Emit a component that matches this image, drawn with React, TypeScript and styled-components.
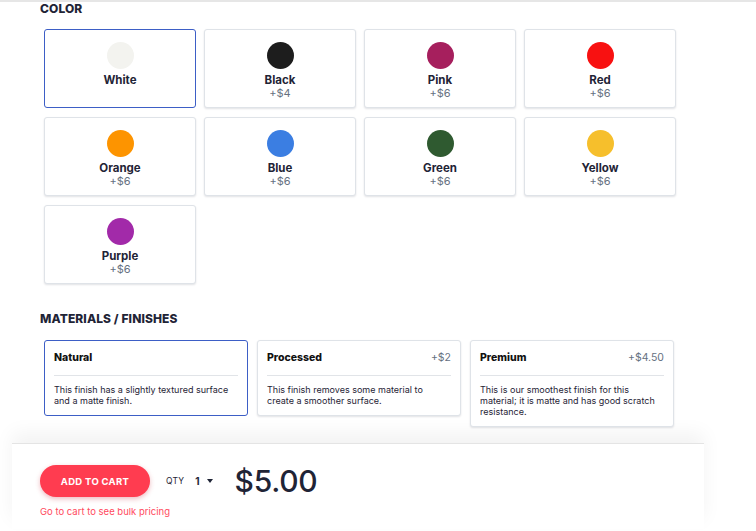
import styled, { createGlobalStyle } from 'styled-components';

const GlobalStyle = createGlobalStyle`
  body {
    margin: 0;
    background: #ffffff;
    font-family: Inter, "Noto Sans", sans-serif;
    color: #1f2436;
  }
`;

const Page = styled.div`
  width: 756px;
  height: 531px;
  overflow: hidden;
  border-top: 2px solid #e6e6e6;
  box-sizing: border-box;
`;

const Content = styled.div`
  padding: 0 40px;
`;

const SectionTitle = styled.h2<{ $gap?: number; $below?: number }>`
  margin: ${({ $gap }) => $gap ?? 0}px 0 ${({ $below }) => $below ?? 14}px;
  font-size: 12px;
  line-height: 14px;
  font-weight: 800;
  letter-spacing: 0.1px;
  text-transform: uppercase;
  color: #1f2436;
`;

const ColorGrid = styled.div`
  display: grid;
  grid-template-columns: repeat(4, 152px);
  column-gap: 8px;
  row-gap: 9px;
  margin-left: 4px;
`;

const Card = styled.div<{ $selected?: boolean }>`
  box-sizing: border-box;
  background: #fff;
  border: 1px solid ${({ $selected }) => ($selected ? '#3d5ec6' : '#dfe3e8')};
  border-radius: 3px;
  box-shadow: ${({ $selected }) => ($selected ? 'none' : '0 1px 2px rgba(40, 50, 70, 0.14)')};
  cursor: pointer;
`;

const ColorCard = styled(Card)`
  height: 79px;
  display: flex;
  flex-direction: column;
  align-items: center;
  padding-top: 12px;
`;

const Swatch = styled.div<{ $color: string }>`
  width: 27px;
  height: 27px;
  border-radius: 50%;
  background: ${({ $color }) => $color};
  margin-bottom: 4px;
`;

const ColorName = styled.div`
  font-size: 11.5px;
  line-height: 14px;
  font-weight: 700;
  color: #1f2436;
`;

const Price = styled.div`
  font-size: 11px;
  line-height: 13px;
  color: #66717f;
`;

const MaterialGrid = styled.div`
  display: grid;
  grid-template-columns: repeat(3, 204px);
  column-gap: 9px;
  align-items: start;
  margin-left: 4px;
`;

const MaterialCard = styled(Card)`
  padding: 10px 9px 9px;
`;

const MaterialHead = styled.div`
  display: flex;
  justify-content: space-between;
  align-items: center;
  padding-bottom: 10px;
  border-bottom: 1px solid #e1e4e8;
  margin-bottom: 8px;
`;

const MaterialName = styled.div`
  font-size: 10.5px;
  line-height: 14px;
  font-weight: 800;
  color: #111;
`;

const MaterialPrice = styled.div`
  font-size: 10.5px;
  line-height: 14px;
  color: #66717f;
`;

const MaterialText = styled.p`
  margin: 0;
  font-size: 9px;
  line-height: 11px;
  color: #1f2436;
`;

const Footer = styled.div`
  margin: 16px 0 0 12px;
  width: 692px;
  border-top: 1px solid #e4e4e4;
  box-shadow: 0 -10px 18px rgba(0, 0, 0, 0.05);
  padding: 19px 28px 12px;
  box-sizing: border-box;
  background: #fff;
`;

const BuyRow = styled.div`
  display: flex;
  align-items: center;
`;

const CartButton = styled.button`
  width: 110px;
  height: 32px;
  border: none;
  border-radius: 16px;
  background: #ff3c50;
  color: #fff;
  font-family: inherit;
  font-size: 9.5px;
  font-weight: 700;
  letter-spacing: 0.3px;
  box-shadow: 0 2px 5px rgba(200, 30, 50, 0.3);
  cursor: pointer;
`;

const QtyLabel = styled.span`
  margin-left: 16px;
  font-size: 8.5px;
  color: #1f2436;
  letter-spacing: 0.2px;
`;

const QtySelect = styled.span`
  display: flex;
  align-items: center;
  gap: 7px;
  margin-left: 11px;
  font-size: 10px;
  font-weight: 700;
  color: #1f2436;
`;

const Caret = styled.span`
  width: 0;
  height: 0;
  border-left: 3px solid transparent;
  border-right: 3px solid transparent;
  border-top: 4px solid #1f2436;
`;

const Total = styled.span`
  margin-left: 22px;
  font-size: 30px;
  font-weight: 500;
  color: #1f2436;
  letter-spacing: -0.3px;
`;

const BulkNote = styled.div`
  margin-top: 7px;
  font-size: 9.5px;
  color: #ff4a5e;
`;

const colors = [
  { name: 'White', color: '#f3f3ef', price: '' },
  { name: 'Black', color: '#1d1d1d', price: '+$4' },
  { name: 'Pink', color: '#a61f5d', price: '+$6' },
  { name: 'Red', color: '#f81111', price: '+$6' },
  { name: 'Orange', color: '#fd9400', price: '+$6' },
  { name: 'Blue', color: '#3b7ee2', price: '+$6' },
  { name: 'Green', color: '#2f5a30', price: '+$6' },
  { name: 'Yellow', color: '#f6bf2c', price: '+$6' },
  { name: 'Purple', color: '#a22aa9', price: '+$6' },
];

const materials = [
  { name: 'Natural', price: '', text: 'This finish has a slightly textured surface and a matte finish.' },
  { name: 'Processed', price: '+$2', text: 'This finish removes some material to create a smoother surface.' },
  {
    name: 'Premium',
    price: '+$4.50',
    text: 'This is our smoothest finish for this material; it is matte and has good scratch resistance.',
  },
];

export default function App() {
  return (
    <Page>
      <GlobalStyle />
      <Content>
        <SectionTitle $gap={0} $below={13}>Color</SectionTitle>
        <ColorGrid>
          {colors.map((c, i) => (
            <ColorCard key={c.name} $selected={i === 0}>
              <Swatch $color={c.color} />
              <ColorName>{c.name}</ColorName>
              {c.price && <Price>{c.price}</Price>}
            </ColorCard>
          ))}
        </ColorGrid>
        <SectionTitle $gap={28}>Materials / Finishes</SectionTitle>
        <MaterialGrid>
          {materials.map((m, i) => (
            <MaterialCard key={m.name} $selected={i === 0}>
              <MaterialHead>
                <MaterialName>{m.name}</MaterialName>
                {m.price && <MaterialPrice>{m.price}</MaterialPrice>}
              </MaterialHead>
              <MaterialText>{m.text}</MaterialText>
            </MaterialCard>
          ))}
        </MaterialGrid>
      </Content>
      <Footer>
        <BuyRow>
          <CartButton>ADD TO CART</CartButton>
          <QtyLabel>QTY</QtyLabel>
          <QtySelect>
            1 <Caret />
          </QtySelect>
          <Total>$5.00</Total>
        </BuyRow>
        <BulkNote>Go to cart to see bulk pricing</BulkNote>
      </Footer>
    </Page>
  );
}
